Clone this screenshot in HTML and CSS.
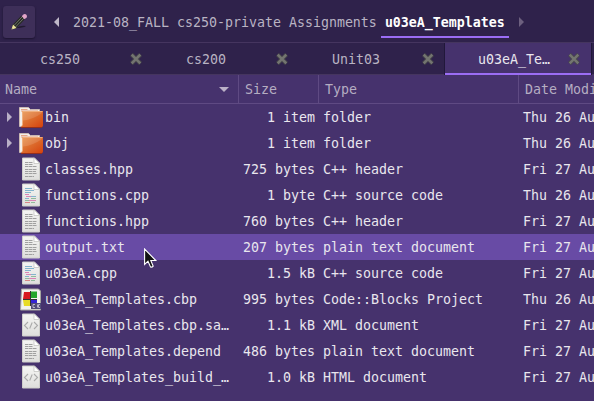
FILE: index.html
```html
<!DOCTYPE html>
<html lang="en">
<head>
<meta charset="utf-8">
<title>u03eA_Templates</title>
<link rel="stylesheet" href="styles.css">
</head>
<body>
<svg class="defs" aria-hidden="true">
  <defs>
    <linearGradient id="orange" x1="0" y1="0" x2="1" y2="1"><stop offset="0" stop-color="#e9964e"/><stop offset=".5" stop-color="#dc6b2c"/><stop offset="1" stop-color="#d5420d"/></linearGradient>
    <linearGradient id="paper" x1="0" y1="0" x2="0" y2="1"><stop offset="0" stop-color="#f5f5f3"/><stop offset="1" stop-color="#dededc"/></linearGradient>
    <symbol id="folder" viewBox="0 0 24 24">
      <path d="M.5 21.500V2.500h9l2 2H20.500V8H3.500v13.500z" fill="#f3eee9" stroke="#c9b8b3"/>
      <path d="M2 4.500h6.500M2 6h17" stroke="#e5a586"/>
      <path d="M3 6h21V20.500q0 1.500-1.500 1.500H2Q3 21 3 19.500z" fill="url(#orange)"/>
      <path d="M3.500 20.500V6.500H23.500" fill="none" stroke="#f0ae7c"/>
      <path d="M4 15.500Q14 14.500 23 8V7H4z" fill="#fff" opacity=".13"/>
      <path d="M2 22.500H23" stroke="#942f1c"/>
    </symbol>
    <symbol id="sheet" viewBox="0 0 18 24">
      <path d="M.5 1h12L17.500 6v17H.5z" fill="url(#paper)" stroke="#cfcfcb"/>
      <path d="M12 .8v5.700h5.700z" fill="#fff" stroke="#bebebc" stroke-width=".7"/>
    </symbol>
    <symbol id="text" viewBox="0 0 18 24">
      <use href="#sheet"/>
      <path d="M3 5.500h8M3 7.500h8M3 9.500h12M3 12.500h12M3 14.500h11M3 16.500h12M3 19.500h9" stroke="#a0a0a0" stroke-dasharray="3 .5 4 .5"/>
    </symbol>
    <symbol id="source" viewBox="0 0 18 24">
      <use href="#sheet"/>
      <path d="M3 5.500h7M3 7.500h9M3 9.500h6M9 13.500h5M3 15.500h4" stroke="#84b4cd"/>
      <path d="M3 11.500h4M4 13.500h5M7 17.500h7" stroke="#d984b6"/>
      <path d="M3 17.500h4M9 15.500h5M9 19.500h4" stroke="#91b99b"/>
      <path d="M3 19.500h5" stroke="#d88686"/>
    </symbol>
    <symbol id="markup" viewBox="0 0 18 24">
      <use href="#sheet"/>
      <path d="M6 9l-3.500 3.500L6 16M12 9l3.500 3.500L12 16M10.200 9.500l-2.500 6" fill="none" stroke="#aaa" stroke-width="1.100"/>
    </symbol>
    <symbol id="blocks" viewBox="0 0 22 23">
      <path d="M1.500 1h17L20.500 3v19H.5z" fill="#f3f3ee" stroke="#a5a5a0"/>
      <path d="M4 4h6v7H3z" fill="#d81920"/><path d="M11 3.500h6V10h-6z" fill="#24a72b"/>
      <path d="M3 12h7v6H4z" fill="#e8dc24"/><path d="M11 11h6v5h-6z" fill="#3323d4"/>
      <path d="M3 11.500h14M10.500 3v15" stroke="#343434"/>
      <path d="M11 15h10v6H11z" fill="#514c78"/><path d="M15 16.500h-2v3h2M17.500 16.500v3M20 16.500h-1.500v3H20" fill="none" stroke="#d0cddd" stroke-width=".8"/>
    </symbol>
    <symbol id="close" viewBox="0 0 14 14">
      <path d="M2.500 2.500l9 9M11.500 2.500l-9 9" stroke="#48484a" stroke-width="4"/>
      <path d="M2.700 2.700l8.600 8.600M11.300 2.700l-8.600 8.600" stroke="#747571" stroke-width="2.400"/>
    </symbol>
    <symbol id="expand" viewBox="0 0 5 10"><path d="M0 0l5 5-5 5z" fill="#b9afc7"/></symbol>
  </defs>
</svg>
<main class="window">
  <header class="toolbar">
    <button class="edit" aria-label="Edit location"><svg width="18" height="18" viewBox="0 0 18 18">
      <path d="M6 15q5-3 10-2q-3 2-10 2" fill="#211a30"/>
      <path d="M3.500 14.500l9.500-10" stroke="#252923" stroke-width="5"/><path d="M4 12.500l8.500-9M5.500 14l8.500-9" stroke="#73766c"/>
      <path d="M1.500 16.500l1.500-5 3.500 3.500z" fill="#eee59a"/><path d="M1 17l.7-2 1.300 1.300z" fill="#555"/>
      <path d="M11.700 3.200l2-2q1.500-.8 2.700.5t.2 2.800l-2 1.800z" fill="#e2a5c9"/></svg></button>
    <svg class="back" width="5" height="10" viewBox="0 0 5 10"><path d="M5 0v10L0 5z" fill="#bfb8c8"/></svg>
    <nav class="path"><span>2021-08_FALL</span><span>cs250-private</span><span>Assignments</span><span class="current">u03eA_Templates</span></nav>
    <svg class="forward" width="5" height="10" viewBox="0 0 5 10"><path d="M0 0l5 5-5 5z" fill="#6d607f"/></svg>
  </header>
  <div class="tabs">
    <div class="tab"><span>cs250</span><svg class="close"><use href="#close"/></svg></div>
    <div class="tab"><span>cs200</span><svg class="close"><use href="#close"/></svg></div>
    <div class="tab"><span>Unit03</span><svg class="close"><use href="#close"/></svg></div>
    <div class="tab active"><span>u03eA_Te…</span><svg class="close"><use href="#close"/></svg></div>
  </div>
  <div class="head"><span class="sorted">Name<svg width="10" height="5" viewBox="0 0 10 5"><path d="M0 0h10L5 5z" fill="#bbb1c7"/></svg></span><span>Size</span><span>Type</span><span>Date Modified</span></div>
  <div class="files">
    <div class="row"><div class="name"><svg class="expand"><use href="#expand"/></svg><svg class="icon folder"><use href="#folder"/></svg>bin</div><span class="size">1 item</span><span>folder</span><span>Thu 26 Aug 2021</span></div>
    <div class="row"><div class="name"><svg class="expand"><use href="#expand"/></svg><svg class="icon folder"><use href="#folder"/></svg>obj</div><span class="size">1 item</span><span>folder</span><span>Thu 26 Aug 2021</span></div>
    <div class="row"><div class="name"><svg class="icon"><use href="#text"/></svg>classes.hpp</div><span class="size">725 bytes</span><span>C++ header</span><span>Fri 27 Aug 2021</span></div>
    <div class="row"><div class="name"><svg class="icon"><use href="#source"/></svg>functions.cpp</div><span class="size">1 byte</span><span>C++ source code</span><span>Thu 26 Aug 2021</span></div>
    <div class="row"><div class="name"><svg class="icon"><use href="#text"/></svg>functions.hpp</div><span class="size">760 bytes</span><span>C++ header</span><span>Fri 27 Aug 2021</span></div>
    <div class="row selected"><div class="name"><svg class="icon"><use href="#text"/></svg>output.txt</div><span class="size">207 bytes</span><span>plain text document</span><span>Fri 27 Aug 2021</span></div>
    <div class="row"><div class="name"><svg class="icon"><use href="#source"/></svg>u03eA.cpp</div><span class="size">1.5 kB</span><span>C++ source code</span><span>Fri 27 Aug 2021</span></div>
    <div class="row"><div class="name"><svg class="icon blocks"><use href="#blocks"/></svg>u03eA_Templates.cbp</div><span class="size">995 bytes</span><span>Code::Blocks Project</span><span>Thu 26 Aug 2021</span></div>
    <div class="row"><div class="name"><svg class="icon"><use href="#markup"/></svg>u03eA_Templates.cbp.sa…</div><span class="size">1.1 kB</span><span>XML document</span><span>Fri 27 Aug 2021</span></div>
    <div class="row"><div class="name"><svg class="icon"><use href="#text"/></svg>u03eA_Templates.depend</div><span class="size">486 bytes</span><span>plain text document</span><span>Fri 27 Aug 2021</span></div>
    <div class="row"><div class="name"><svg class="icon"><use href="#markup"/></svg>u03eA_Templates_build_…</div><span class="size">1.0 kB</span><span>HTML document</span><span>Fri 27 Aug 2021</span></div>
  </div>
  <svg class="pointer" width="14" height="21" viewBox="0 0 14 21"><path d="M.6 1v15.500l3.400-3.300 2.500 5.700q1.500.8 2.700-.7L6.800 12.500h5z" fill="#111" stroke="#fff" stroke-width="1.100"/></svg>
</main>
</body>
</html>
```

FILE: styles.css
```css
* { box-sizing: border-box; }
body {
  margin: 0;
  overflow: hidden;
  background: #46326d;
  color: #e9e6ee;
  font: 13.29px/26px "DejaVu Sans Mono", monospace;
}
.defs { position: absolute; width: 0; height: 0; }
.window { position: relative; width: 594px; height: 401px; overflow: hidden; white-space: nowrap; }
svg { flex: none; display: block; }
.toolbar {
  display: flex;
  align-items: center;
  height: 43px;
  padding-left: 3px;
  background: #2f224b;
  border-bottom: 1px solid #45355f;
  color: #b9b3c3;
}
.edit {
  display: grid;
  place-items: center;
  width: 32px;
  height: 32px;
  margin-top: 2px;
  padding: 0;
  border: 0;
  border-radius: 3px;
  background: #3e2f59;
  box-shadow: 0 1px 2px #1d1430;
}
.back { margin: 2px 14px 0 19px; }
.path { display: flex; gap: 8px; height: 38px; margin-top: 4px; line-height: 37px; }
.path .current {
  height: 34px;
  margin-left: -4px;
  padding: 0 4px;
  border-bottom: 2px solid #9b6df4;
  color: #fff;
  font-weight: bold;
}
.forward { margin: 2px 0 0 10px; }
.tabs { display: flex; height: 32px; padding-left: 7px; background: #2f224b; border-bottom: 1px solid #45355f; color: #b9b3c3; }
.tab { display: flex; align-items: center; justify-content: space-between; width: 146px; height: 32px; padding: 0 10px 0 33px; }
.tab span { padding-top: 2px; line-height: 32px; }
.tab.active { background: #46326d; color: #e9e6ee; border-bottom: 2px solid #9b6df4; box-shadow: -1px 0 #21183a, 1px 0 #21183a; }
.tab.active span { padding-top: 4px; }
.tab.active .close { margin-top: 2px; }
.close { width: 14px; height: 14px; }
.head, .row { display: grid; grid-template-columns: 238px 80px 200px 1fr; }
.head { height: 29px; border-bottom: 1px solid #5f4a83; color: #b5adc2; line-height: 28px; }
.head span { padding: 1px 0 0 6px; border-left: 1px solid #5f4a83; overflow: hidden; }
.head .sorted { display: flex; align-items: center; justify-content: space-between; padding: 1px 9px 0 5px; border: 0; }
.row { height: 26px; padding-top: 1px; }
.row > span { padding-left: 5px; overflow: hidden; }
.row .size { padding: 0 3px 0 0; text-align: right; }
.name { position: relative; display: flex; align-items: center; padding-left: 45px; }
.icon { width: 18px; height: 24px; margin: -2px 5px 0 -23px; }
.icon.folder { width: 24px; margin: -2px 2px 0 -26px; }
.icon.blocks { width: 22px; height: 23px; margin: -1px 3px 0 -25px; }
.expand { position: absolute; left: 7px; top: 7px; width: 5px; height: 10px; }
.selected { background: #684ba5; }
.pointer { position: absolute; left: 144px; top: 248px; }
```
